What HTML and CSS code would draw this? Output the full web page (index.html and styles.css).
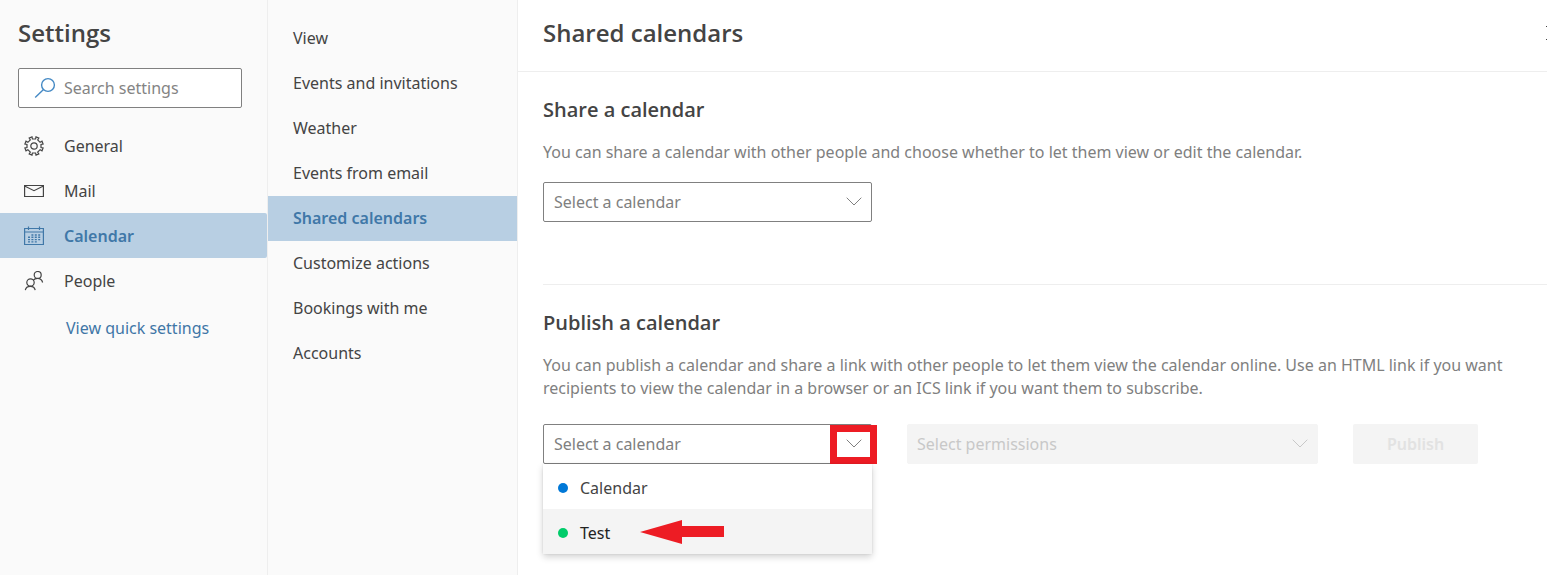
FILE: index.html
```html
<!DOCTYPE html>
<html lang="en">
<head>
  <meta charset="UTF-8">
  <meta name="viewport" content="width=device-width, initial-scale=1.0">
  <title>Settings - Shared calendars</title>
  <link rel="stylesheet" href="styles.css">
</head>
<body>
  <div class="settings">
    <aside class="sidebar">
      <h1>Settings</h1>
      <div class="search">
        <svg class="search-icon" width="22" height="22" viewBox="0 0 22 22"><circle cx="14" cy="8" r="6.4"/><path d="M9.5 12.5L1.2 20.5"/></svg>
        <input type="text" placeholder="Search settings" aria-label="Search settings">
      </div>
      <nav class="nav">
        <a class="nav-item" href="#general">
          <svg class="nav-icon" viewBox="0 0 20 20"><circle cx="10" cy="10" r="3.2"/><path d="M8.4 3L8 .9L5.2 2L6.3 3.9L3.9 6.3L2 5.2L.9 8L3 8.4V11.6L.9 12L2 14.8L3.9 13.7L6.3 16.1L5.2 18L8 19.1L8.4 17H11.6L12 19.1L14.8 18L13.7 16.1L16.1 13.7L18 14.8L19.1 12L17 11.6V8.4L19.1 8L18 5.2L16.1 6.3L13.7 3.9L14.8 2L12 .9L11.6 3Z"/></svg>
          General
        </a>
        <a class="nav-item" href="#mail">
          <svg class="nav-icon" viewBox="0 0 20 20"><path d="M.6 4.5H19.4V15.5H.6ZM.6 5L10 9.7L19.4 5"/></svg>
          Mail
        </a>
        <a class="nav-item active" href="#calendar">
          <svg class="nav-icon" viewBox="0 0 20 20"><path d="M.6 2.5H19.4V18.5H.6ZM.6 6H19.4M4.5 .5V4M15.5 .5V4"/><path class="days" d="M7.4 9H16.5M4 11.3H16.5M4 13.6H16.5M4 15.9H13.5"/></svg>
          Calendar
        </a>
        <a class="nav-item" href="#people">
          <svg class="nav-icon" viewBox="0 0 20 20"><circle cx="13.7" cy="4" r="3.5"/><circle cx="6.5" cy="11.5" r="3.7"/><path d="M1.3 19.2C1.7 16.8 3.5 15.3 6.3 15.3S10.8 16.8 11.2 19.2M9.4 9.2C10.2 8 11.7 7.4 13.6 7.4C16.4 7.4 18 9 18.6 11.5"/></svg>
          People
        </a>
      </nav>
      <a class="quick-link" href="#quick">View quick settings</a>
    </aside>

    <nav class="subnav">
      <a href="#view">View</a>
      <a href="#events">Events and invitations</a>
      <a href="#weather">Weather</a>
      <a href="#email-events">Events from email</a>
      <a class="active" href="#shared">Shared calendars</a>
      <a href="#actions">Customize actions</a>
      <a href="#bookings">Bookings with me</a>
      <a href="#accounts">Accounts</a>
    </nav>

    <main class="content">
      <header class="content-header">
        <h1>Shared calendars</h1>
        <button class="close" type="button" aria-label="Close"><svg width="16" height="16" viewBox="0 0 16 16"><path d="M1 1L15 15M15 1L1 15"/></svg></button>
      </header>

      <section class="section">
        <h2>Share a calendar</h2>
        <p>You can share a calendar with other people and choose whether to let them view or edit the calendar.</p>
        <div class="controls">
          <div class="dropdown">
            <select aria-label="Calendar to share"><option>Select a calendar</option></select>
            <svg class="chevron" viewBox="0 0 16 9"><path d="M.7 .7L8 8L15.3 .7"/></svg>
          </div>
        </div>
      </section>

      <section class="section publish">
        <h2>Publish a calendar</h2>
        <p>You can publish a calendar and share a link with other people to let them view the calendar online. Use an HTML link if you want recipients to view the calendar in a browser or an ICS link if you want them to subscribe.</p>
        <div class="controls">
          <div class="dropdown">
            <select aria-label="Calendar to publish"><option>Select a calendar</option></select>
            <svg class="chevron" viewBox="0 0 16 9"><path d="M.7 .7L8 8L15.3 .7"/></svg>
            <span class="highlight"></span>
            <ul class="menu">
              <li><span class="dot blue"></span>Calendar</li>
              <li class="hover"><span class="dot green"></span>Test
                <svg class="arrow" width="84" height="24" viewBox="0 0 84 24"><path d="M0 12L42 0V6H84V17H42V24Z"/></svg>
              </li>
            </ul>
          </div>
          <div class="dropdown permissions">
            <select aria-label="Permissions" disabled><option>Select permissions</option></select>
            <svg class="chevron" viewBox="0 0 16 9"><path d="M.7 .7L8 8L15.3 .7"/></svg>
          </div>
          <button class="publish-button" type="button" disabled>Publish</button>
        </div>
      </section>
    </main>
  </div>
</body>
</html>
```
FILE: styles.css
```css
* {
  box-sizing: border-box;
}
body {
  margin: 0;
  font-family: 'Noto Sans', 'Open Sans', sans-serif;
  font-size: 16px;
  line-height: 23px;
  color: #444;
  background: #fff;
  overflow-x: hidden;
}
h1, h2, p, ul {
  margin: 0;
  padding: 0;
}
h1 {
  font-family: 'Open Sans', sans-serif;
  font-size: 24px;
  line-height: 32px;
  font-weight: 600;
}
h2 {
  font-family: 'Open Sans', sans-serif;
  font-size: 20px;
  line-height: 28px;
  font-weight: 600;
}
a {
  color: inherit;
  text-decoration: none;
}
svg {
  fill: none;
  stroke: currentColor;
}
.settings {
  display: flex;
  min-height: 100vh;
}
.sidebar {
  flex: 0 0 268px;
  min-width: 0;
  background: #fafafa;
  border-right: 1px solid #eee;
}
.sidebar h1 {
  padding: 17px 18px 19px;
}
.search {
  display: flex;
  align-items: center;
  gap: 8px;
  height: 40px;
  margin: 0 25px 15px 18px;
  padding-left: 15px;
  background: #fff;
  border: 1px solid #808080;
  border-radius: 2px;
}
.search-icon {
  flex: none;
  color: #4489c4;
  stroke-width: 1.4;
}
.search input {
  flex: 1;
  min-width: 0;
  padding: 0;
  border: none;
  outline: none;
  background: none;
  font: inherit;
}
.search input::placeholder {
  color: #848484;
}
.nav-item {
  display: flex;
  align-items: center;
  gap: 20px;
  height: 45px;
  padding: 1px 0 0 24px;
}
.nav-icon {
  width: 20px;
  height: 20px;
  stroke-width: 1.2;
}
.nav-icon .days {
  stroke-width: 1.4;
  stroke-dasharray: 2 1.4;
}
.nav-item.active {
  border-radius: 0 2px 2px 0;
}
.active {
  background: #b8cfe3;
  color: #4078a8;
  font-weight: 600;
}
.quick-link {
  display: block;
  padding: 14px 0 0 66px;
  color: #3f76a6;
}
.subnav {
  flex: 0 0 250px;
  padding-top: 16px;
  background: #fafafa;
  border-right: 1px solid #eee;
}
.subnav a {
  display: block;
  padding-left: 25px;
  line-height: 45px;
}
.content {
  flex: 1;
  min-width: 0;
}
.content-header {
  display: flex;
  justify-content: space-between;
  height: 72px;
  padding: 17px 0 0 25px;
  border-bottom: 1px solid #eee;
}
/* the close button runs past the right edge of the panel */
.close {
  width: 16px;
  height: 32px;
  margin-right: -14px;
  padding: 0;
  border: none;
  background: none;
  color: #444;
}
.close svg {
  display: block;
}
.section {
  margin-left: 25px;
  padding: 24px 0 62px;
}
.section + .section {
  padding-bottom: 20px;
  border-top: 1px solid #eee;
}
.section p {
  margin: 17px 12px 18px 0;
  color: #808080;
}
.section.publish p {
  margin-bottom: 24px;
}
.controls {
  display: flex;
  gap: 35px;
}
.dropdown {
  position: relative;
  flex: 0 1 329px;
  height: 40px;
  color: #808080;
}
.dropdown select {
  appearance: none;
  width: 100%;
  height: 40px;
  padding: 0 40px 0 10px;
  border: 1px solid #808080;
  border-radius: 2px;
  background: #fff;
  color: inherit;
  font: inherit;
}
.chevron {
  position: absolute;
  right: 10px;
  top: 15px;
  width: 16px;
  height: 9px;
  pointer-events: none;
}
.dropdown.permissions {
  flex-basis: 411px;
  color: #c8c8c8;
}
.permissions select {
  padding-left: 9px;
  border-color: #f4f4f4;
  background: #f4f4f4;
  opacity: 1;
}
.highlight {
  position: absolute;
  top: 1px;
  right: -5px;
  width: 47px;
  height: 39px;
  border: 7px solid #ed1c24;
  pointer-events: none;
}
.menu {
  position: absolute;
  top: 100%;
  left: 0;
  width: 100%;
  list-style: none;
  background: #fff;
  border-radius: 0 0 2px 2px;
  box-shadow: 0 3px 7px rgba(0,0,0,0.18), 0 0 2px rgba(0,0,0,0.12);
  color: #444;
}
.menu li {
  display: flex;
  align-items: center;
  height: 45px;
  padding: 3px 0 0 15px;
}
.menu .hover {
  background: #f4f4f4;
  color: #222;
}
.dot {
  width: 10px;
  height: 10px;
  margin-right: 12px;
  border-radius: 50%;
}
.blue {
  background: #0078d7;
}
.green {
  background: #00cc6a;
}
.arrow {
  margin: 0 0 3px 30px;
  fill: #ed1c24;
  stroke: none;
}
.publish-button {
  flex: 0 0 125px;
  height: 40px;
  border: none;
  border-radius: 2px;
  background: #f4f4f4;
  color: #e2e2e2;
  font: inherit;
  font-weight: 600;
}
```
